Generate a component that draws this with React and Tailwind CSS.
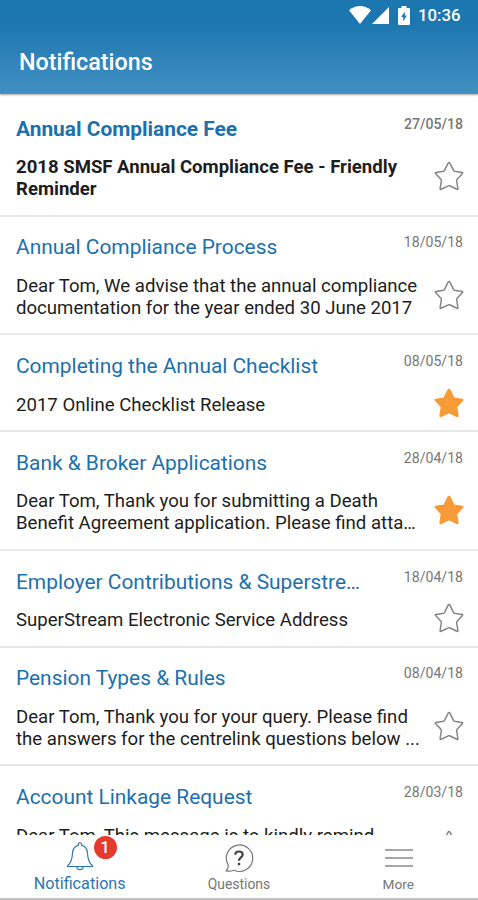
import React from 'react';

const notifications = [
  {
    title: 'Annual Compliance Fee',
    date: '27/05/18',
    lines: ['2018 SMSF Annual Compliance Fee - Friendly', 'Reminder'],
    unread: true,
  },
  {
    title: 'Annual Compliance Process',
    date: '18/05/18',
    lines: ['Dear Tom, We advise that the annual compliance', 'documentation for the year ended 30 June 2017'],
  },
  {
    title: 'Completing the Annual Checklist',
    date: '08/05/18',
    lines: ['2017 Online Checklist Release'],
    starred: true,
  },
  {
    title: 'Bank & Broker Applications',
    date: '28/04/18',
    lines: ['Dear Tom, Thank you for submitting a Death', 'Benefit Agreement application. Please find atta…'],
    starred: true,
  },
  {
    title: 'Employer Contributions & Superstre…',
    date: '18/04/18',
    lines: ['SuperStream Electronic Service Address'],
  },
  {
    title: 'Pension Types & Rules',
    date: '08/04/18',
    lines: ['Dear Tom, Thank you for your query. Please find', 'the answers for the centrelink questions below ...'],
  },
  {
    title: 'Account Linkage Request',
    date: '28/03/18',
    lines: ['Dear Tom, This message is to kindly remind', ''],
  },
];

const Star = ({ filled }) => (
  <svg
    viewBox="0 0 30 30"
    className={`h-[30px] w-[30px] shrink-0 ${filled ? 'fill-[#f79a38] stroke-[#f79a38]' : 'fill-none stroke-[#858585]'}`}
    strokeWidth="1.5"
    strokeLinejoin="round"
  >
    <path d="M15 1.500q.6 0 .9.700l3.700 7.500q.2.400.7.500l7.700 1.200q1.200.3.400 1.200l-5.500 6q-.4.400-.3.900l1.300 8q.1 1.200-1 .8l-7.300-3.500q-.6-.3-1.200 0l-7.300 3.500q-1.100.4-1-.8l1.300-8q.1-.5-.3-.9l-5.500-6q-.8-.9.400-1.200l7.700-1.200q.5-.1.700-.5l3.700-7.500q.3-.7.900-.7z" />
  </svg>
);

const StatusBar = () => (
  <div className="flex h-[30px] items-center justify-end pr-[18px] text-white">
    <svg viewBox="0 0 22 18" className="h-[18px] w-[22px] fill-white">
      <path d="M0 4.2Q11-4 22 4.2L11 18z" />
    </svg>
    <svg viewBox="0 0 17 17" className="ml-px h-[17px] w-[17px] fill-white">
      <path d="M17 0v17H0z" />
    </svg>
    <svg viewBox="0 0 12 19" className="ml-[9px] mr-px h-[19px] w-3 fill-white">
      <path d="M3.500 0h5v2h2.300q1.200 0 1.200 1.200v14.600q0 1.200-1.200 1.200H1.200Q0 19 0 17.800V3.200Q0 2 1.200 2h2.300z" />
      <path d="M6.800 5.500v4h2L5.200 15.500v-4.500h-2z" className="fill-[#1f78b0]" />
    </svg>
    <span className="ml-[7px] w-[42px] whitespace-nowrap text-[16.8px] font-medium leading-none">10:36</span>
  </div>
);

const NotificationRow = ({ title, date, lines, unread, starred }) => (
  <li className="shrink-0 border-b-2 border-[#e8e8e8] bg-white pb-[14.5px] pl-4 pr-[14px] pt-[16.75px]">
    <div className="flex h-7 justify-between">
      <h2 className={`whitespace-nowrap leading-7 text-[#1b70ad] ${unread ? 'text-[20.9px] font-bold' : 'text-[20.9px]'}`}>
        {title}
      </h2>
      <time className={`mr-px whitespace-nowrap text-[14.1px] leading-[19px] text-[#777777] ${unread ? 'font-medium' : ''}`}>
        {date}
      </time>
    </div>
    <div className="mt-[13.5px] flex items-center justify-between">
      <p className={`whitespace-nowrap leading-[22px] text-[#1d1d1d] ${unread ? 'text-[18.57px] font-bold' : 'text-[18.6px]'}`}>
        {lines.map((line) => (
          <span key={line} className="block h-[22px]">{line}</span>
        ))}
      </p>
      <div className="-mb-[2px] -mt-[6px]">
        <Star filled={starred} />
      </div>
    </div>
  </li>
);

const BottomNav = () => (
  <nav className="grid h-[65px] shrink-0 grid-cols-3 border-b-2 border-[#c4c4c4] bg-white text-[13.7px] text-[#777777]">
    <div className="flex flex-col items-center text-[#2b77b4]">
      <div className="relative mt-[7px] h-[30px]">
        <svg viewBox="0 0 28 29" className="h-[29px] w-7 fill-none stroke-[#2b77b4]" strokeWidth="1.2" strokeLinejoin="round">
          <path d="M12.300 3.300V2.600a1.700 1.700 0 0 1 3.400 0v.7c3.600.9 5.400 3.400 5.700 7.200.4 6.500 1.600 10.500 4.600 12.700q.7.500.5 1.300h-25q-.2-.8.5-1.300c3-2.200 4.200-6.200 4.600-12.700.3-3.800 2.100-6.300 5.700-7.200z" />
          <path d="M10.800 24.500a3.200 3.200 0 0 0 6.400 0" />
        </svg>
        <span className="absolute -top-[6px] left-[28px] flex h-[23px] w-[23px] items-center justify-center rounded-full bg-[#e43b2e] text-[16px] font-medium text-white">1</span>
      </div>
      <span className="mt-[2px] text-[16.2px] leading-5">Notifications</span>
    </div>
    <div className="flex flex-col items-center">
      <svg viewBox="0 0 30 30" className="mt-[8px] h-[30px] w-[30px] shrink-0 fill-none stroke-[#777777]" strokeWidth="1.2">
        <path d="M4.200 22A13.200 13.200 0 1 1 10 27.200Q7 28.600 2 28q2.500-2 2.200-6z" strokeLinejoin="round" />
        <path d="M11.300 11.800Q11.300 8.500 15 8.500T18.700 11.700C18.700 14.500 15 14.400 15 17.800" className="stroke-[#444444]" strokeWidth="2.200" />
        <path d="M15 19.800v2.500" className="stroke-[#444444]" strokeWidth="2.400" />
      </svg>
      <span className="mt-[2px] text-[13.9px] leading-[18px]">Questions</span>
    </div>
    <div className="flex flex-col items-center">
      <div className="mt-[14px] ml-px flex h-[18px] w-7 flex-col justify-between">
        <div className="h-[2px] bg-[#a6a6a6]" />
        <div className="h-[2px] bg-[#a6a6a6]" />
        <div className="h-[2px] bg-[#a6a6a6]" />
      </div>
      <span className="mt-2 leading-[18px]">More</span>
    </div>
  </nav>
);

export default function App() {
  return (
    <div className="flex h-[900px] w-[478px] flex-col overflow-hidden bg-white font-[Roboto,sans-serif]">
      <header className="h-[94px] shrink-0 bg-linear-to-b from-[#1c76af] from-25% to-[#4190c2] shadow-[0_1px_2px_rgba(0,0,0,0.35)]">
        <StatusBar />
        <h1 className="ml-[19px] mt-[16px] text-[23.3px] font-medium leading-8 text-white">Notifications</h1>
      </header>
      <ul className="flex min-h-0 flex-1 flex-col overflow-hidden pt-[3.75px]">
        {notifications.map((item) => (
          <NotificationRow key={item.title} {...item} />
        ))}
      </ul>
      <BottomNav />
    </div>
  );
}
